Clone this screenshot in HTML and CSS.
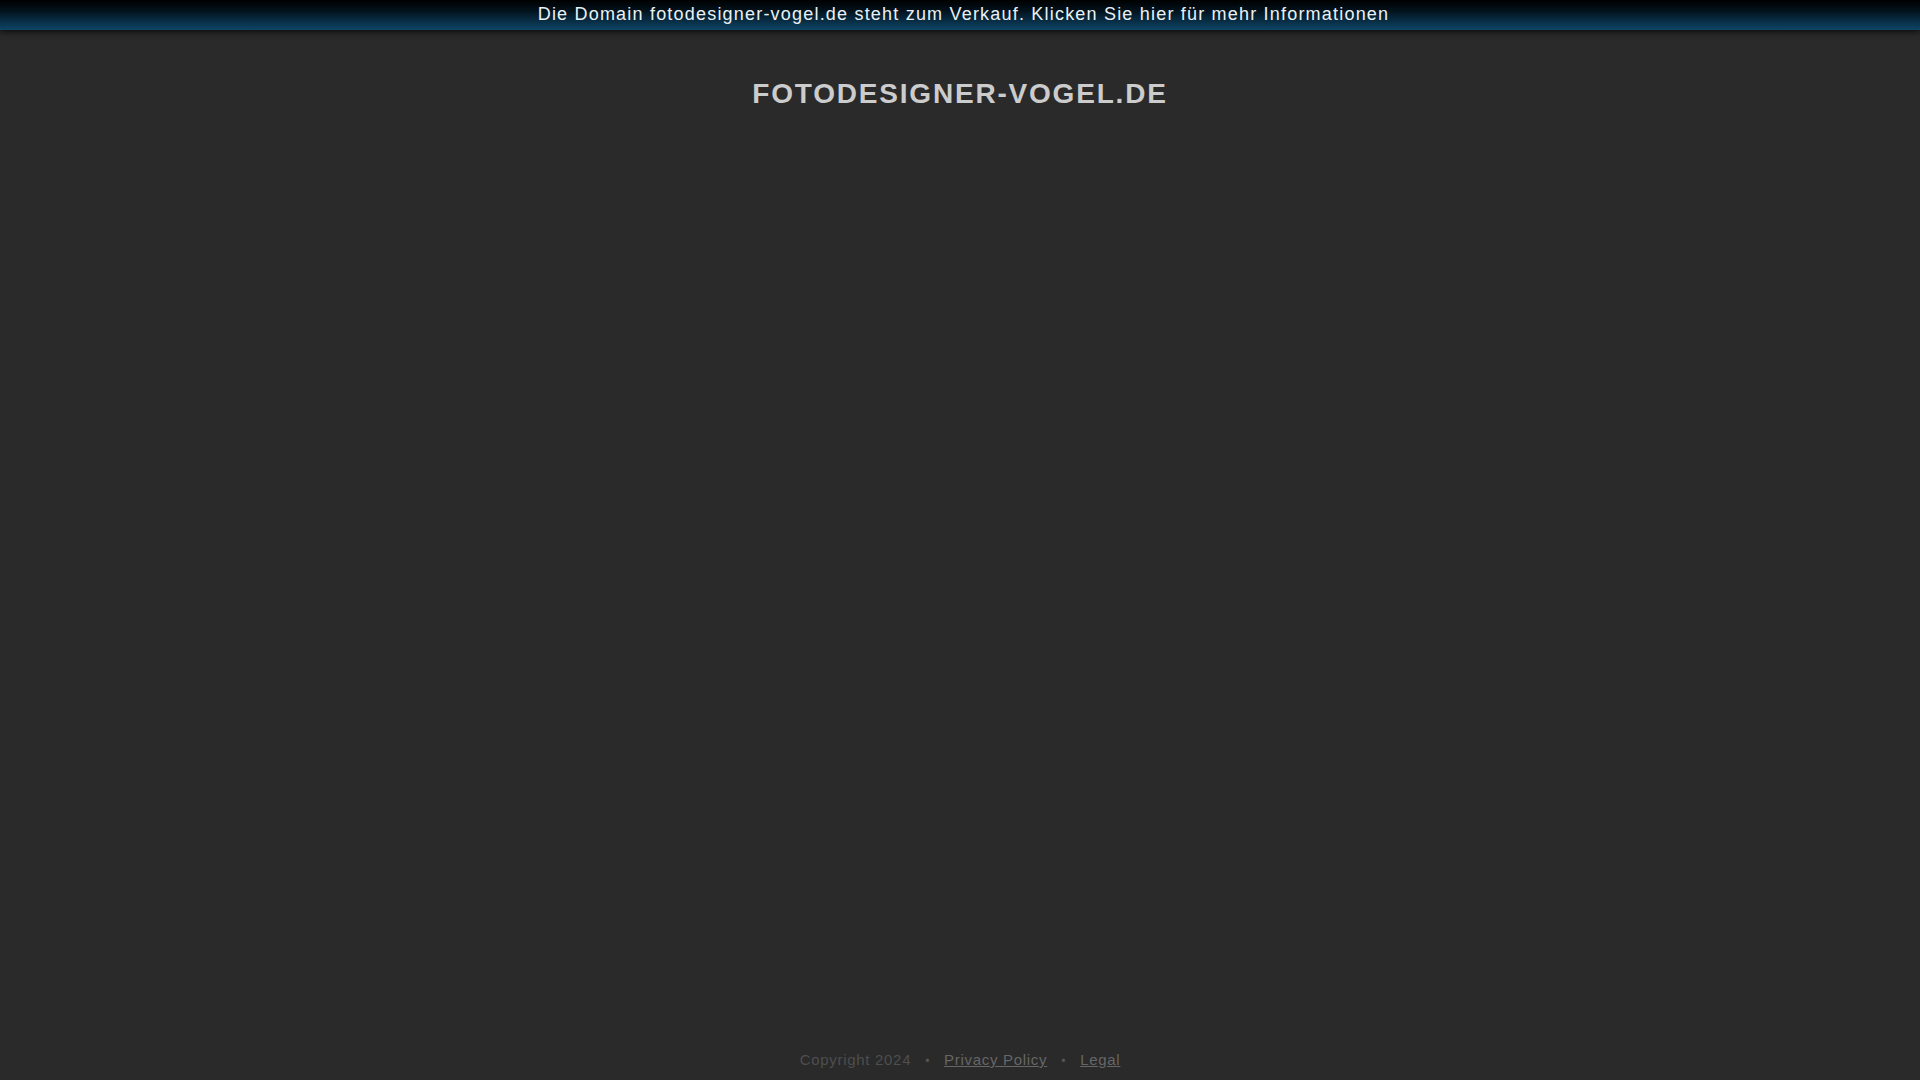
FILE: index.html
```html
<!DOCTYPE html>
<html lang="de">
<head>
<meta charset="utf-8">
<title>fotodesigner-vogel.de</title>
<link rel="stylesheet" href="styles.css">
</head>
<body>
<a class="topbar" href="#">Die Domain fotodesigner-vogel.de steht zum Verkauf. Klicken Sie hier für mehr Informationen</a>
<main class="content">
<h1 class="title">FOTODESIGNER-VOGEL.DE</h1>
</main>
<footer class="footer">
<span class="copy">Copyright 2024</span>
<span class="sep">•</span>
<a class="flink" href="#">Privacy Policy</a>
<span class="sep">•</span>
<a class="flink" href="#">Legal</a>
</footer>
</body>
</html>
```
FILE: styles.css
```css
html, body {
  margin: 0;
  padding: 0;
}
body {
  background: #2a2a2a;
  font-family: "Liberation Sans", Arial, sans-serif;
  min-height: 100vh;
  display: flex;
  flex-direction: column;
}
.topbar {
  display: block;
  height: 30px;
  line-height: 29px;
  padding-left: 7px;
  text-align: center;
  font-size: 18px;
  letter-spacing: 1.2px;
  color: #eaf1f5;
  text-decoration: none;
  background: linear-gradient(to bottom, #000000 0%, #02121c 35%, #0a3550 80%, #0e4566 100%);
  box-shadow: 0 2px 6px rgba(0, 0, 0, 0.7);
  position: relative;
  z-index: 1;
}
.content {
  flex: 1;
  display: flex;
  flex-direction: column;
  align-items: center;
}
.title {
  margin: 48px 0 0;
  font-size: 28px;
  font-weight: bold;
  letter-spacing: 1.8px;
  color: #cccccc;
  line-height: normal;
}
.footer {
  display: flex;
  justify-content: center;
  align-items: baseline;
  gap: 14px;
  font-size: 15px;
  letter-spacing: 0.7px;
  padding-bottom: 12px;
  color: #4e4e4e;
}
.sep {
  color: #555555;
  font-size: 12px;
}
.flink {
  color: #666666;
  text-decoration: underline;
}
```
